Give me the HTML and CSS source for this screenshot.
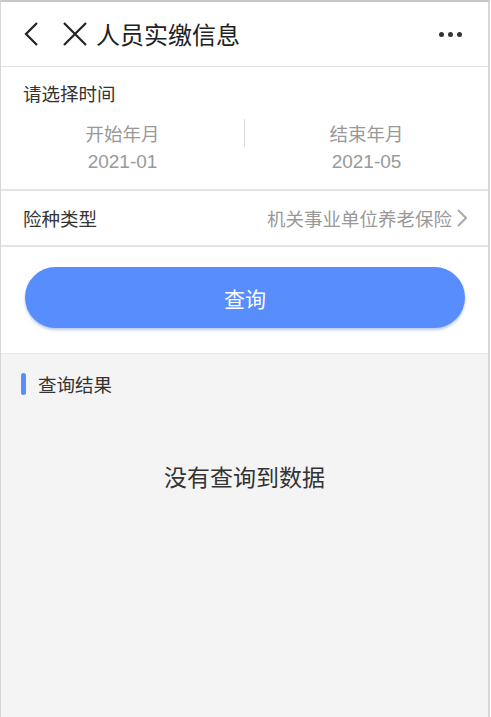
FILE: index.html
```html
<!DOCTYPE html>
<html lang="zh-CN">
<head>
    <meta charset="UTF-8">
    <meta name="viewport" content="width=device-width, initial-scale=1.0">
    <title>人员实缴信息</title>
    <link rel="stylesheet" href="styles.css">
</head>
<body>
    <div class="page">
        <div class="navbar">
            <span class="nav-icon back">
                <svg width="18" height="26" viewBox="0 0 18 26"><path d="M15 2 L4 13 L15 24" fill="none" stroke="#222" stroke-width="2.2"/></svg>
            </span>
            <span class="nav-icon close">
                <svg width="26" height="26" viewBox="0 0 26 26"><path d="M2 2 L24 24 M24 2 L2 24" fill="none" stroke="#222" stroke-width="2.2"/></svg>
            </span>
            <h1 class="title">人员实缴信息</h1>
            <span class="more"><i></i><i></i><i></i></span>
        </div>

        <div class="time-block">
            <div class="label">请选择时间</div>
            <div class="range">
                <div class="range-item">
                    <div>开始年月</div>
                    <div class="num">2021-01</div>
                </div>
                <div class="range-sep"></div>
                <div class="range-item">
                    <div>结束年月</div>
                    <div class="num">2021-05</div>
                </div>
            </div>
        </div>

        <div class="row">
            <span class="row-label">险种类型</span>
            <span class="row-value">机关事业单位养老保险
                <svg width="12" height="20" viewBox="0 0 12 20"><path d="M2 2 L10 10 L2 18" fill="none" stroke="#aaa" stroke-width="2"/></svg>
            </span>
        </div>

        <div class="btn-wrap">
            <button type="button" class="btn-query">查询</button>
        </div>

        <div class="result">
            <div class="result-title"><span class="bar"></span>查询结果</div>
            <div class="empty">没有查询到数据</div>
        </div>
    </div>
</body>
</html>
```

FILE: styles.css
```css
html, body {
    margin: 0;
    padding: 0;
    height: 100%;
    background: #fff;
}
body {
    font-family: "Noto Sans CJK SC", "Noto Sans", sans-serif;
    color: #333;
}
.page {
    box-sizing: border-box;
    width: 490px;
    min-height: 717px;
    border-top: 2px solid #c8c8c8;
    border-left: 1px solid #d6d6d6;
    border-right: 2px solid #d6d6d6;
    display: flex;
    flex-direction: column;
}
.navbar {
    height: 64px;
    display: flex;
    align-items: center;
    padding: 0 20px 0 21px;
    border-bottom: 1px solid #e2e2e2;
}
.nav-icon {
    display: flex;
    align-items: center;
}
.back {
    margin-right: 22px;
}
.close {
    margin-right: 8px;
}
.title {
    margin: 0;
    font-size: 24px;
    line-height: 30px;
    font-weight: normal;
    color: #222;
    flex: 1;
}
.more {
    display: flex;
    gap: 4px;
    margin-right: 6px;
}
.more i {
    width: 5px;
    height: 5px;
    border-radius: 50%;
    background: #333;
}
.time-block {
    padding: 13px 0 13px;
    border-bottom: 2px solid #e4e4e4;
}
.label {
    padding: 0 22px;
    font-size: 18.5px;
    line-height: 26px;
}
.range {
    display: flex;
    align-items: center;
    margin-top: 13px;
}
.range-item {
    flex: 1;
    text-align: center;
    color: #999;
    font-size: 18.5px;
    line-height: 28px;
}
.num {
    font-family: "Liberation Sans", "Noto Sans CJK SC", sans-serif;
    font-size: 19px;
    margin-top: 1px;
}
.range-sep {
    width: 1px;
    height: 28px;
    background: #ddd;
    align-self: flex-start;
}
.row {
    height: 54px;
    display: flex;
    align-items: center;
    justify-content: space-between;
    padding: 0 20px 0 22px;
    border-bottom: 2px solid #e4e4e4;
}
.row-label {
    font-size: 18.5px;
}
.row-value {
    color: #999;
    font-size: 18.5px;
    display: flex;
    align-items: center;
    gap: 4px;
}
.btn-wrap {
    padding: 20px 23px 25px 24px;
}
.btn-query {
    width: 100%;
    height: 61px;
    border: none;
    border-radius: 31px;
    background: #578dfd;
    color: #fff;
    font-family: inherit;
    font-size: 21px;
    box-shadow: 0 2px 3px rgba(60, 100, 200, 0.35);
}
.result {
    flex: 1;
    background: #f4f4f4;
    border-top: 1px solid #e6e6e6;
}
.result-title {
    display: flex;
    align-items: center;
    padding: 18px 20px 0 20px;
    font-size: 18.5px;
    line-height: 24px;
}
.bar {
    width: 5px;
    height: 22px;
    border-radius: 3px;
    background: #578dfd;
    margin-right: 12px;
}
.empty {
    text-align: center;
    font-size: 23px;
    margin-top: 63px;
    color: #333;
}
```
